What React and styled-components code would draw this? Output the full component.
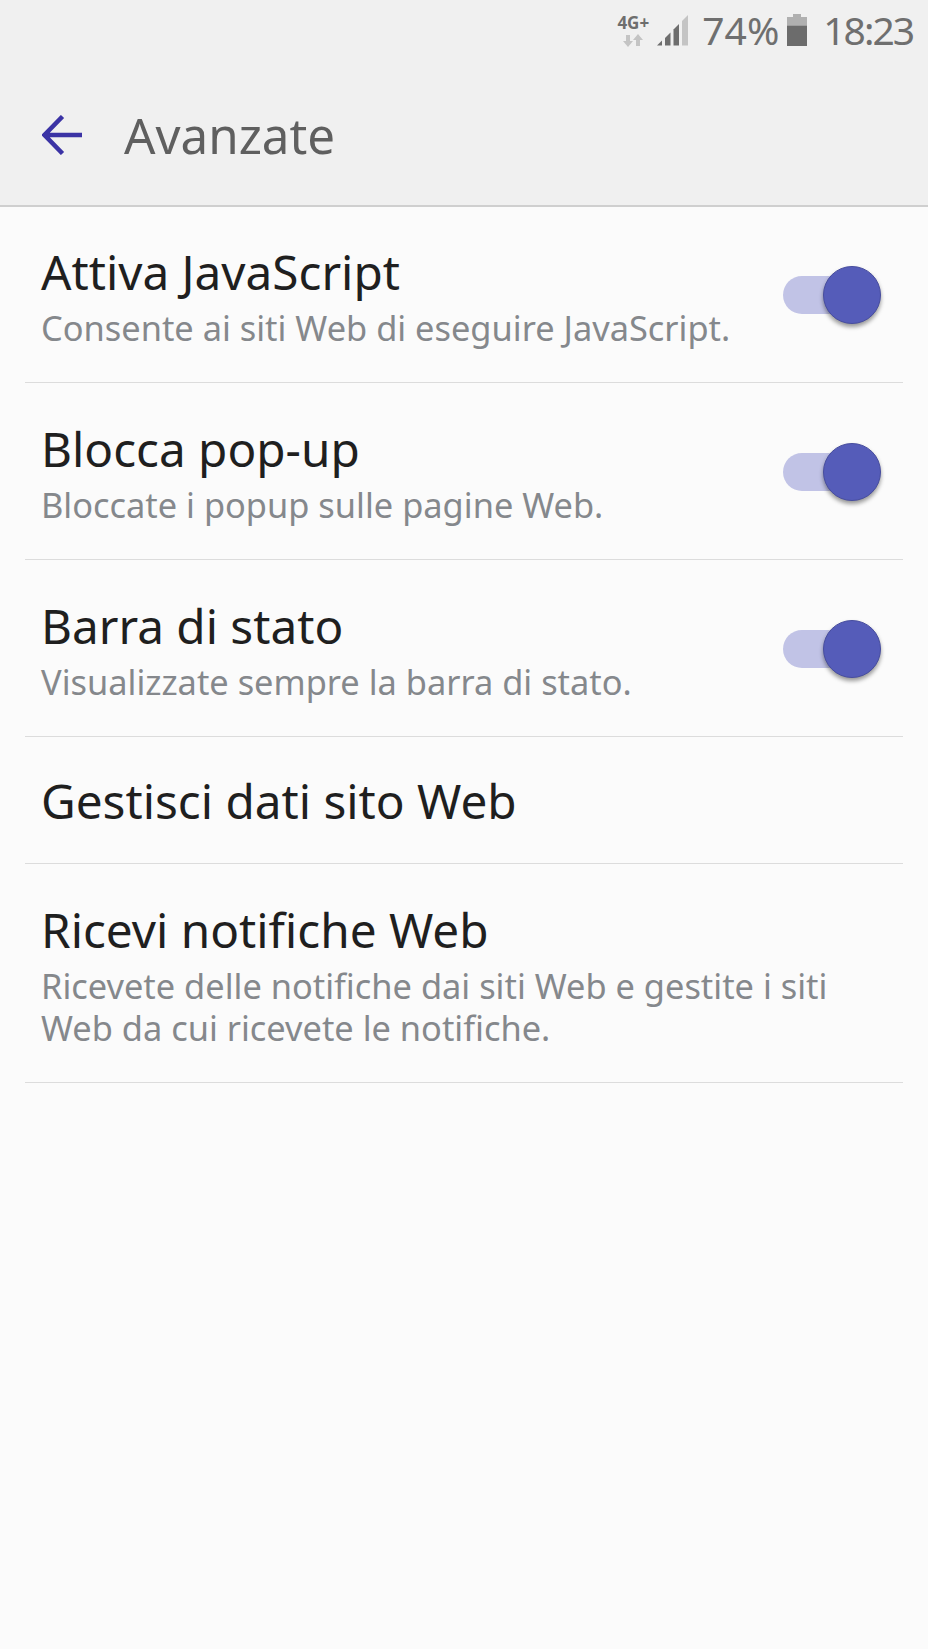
import React from "react";
import styled, { createGlobalStyle } from "styled-components";

const GlobalStyle = createGlobalStyle`
  html, body {
    margin: 0;
    padding: 0;
    background: #fbfbfb;
  }
  body {
    font-family: "Noto Sans", "Open Sans", sans-serif;
  }
`;

const settings = [
  { title: "Attiva JavaScript", text: "Consente ai siti Web di eseguire JavaScript.", toggle: true },
  { title: "Blocca pop-up", text: "Bloccate i popup sulle pagine Web.", toggle: true },
  { title: "Barra di stato", text: "Visualizzate sempre la barra di stato.", toggle: true },
  { title: "Gestisci dati sito Web" },
  {
    title: "Ricevi notifiche Web",
    text: "Ricevete delle notifiche dai siti Web e gestite i siti Web da cui ricevete le notifiche.",
  },
];

const App = () => (
  <Page>
    <GlobalStyle />
    <Header>
      <StatusBar>
        <Network>
          <NetworkLabel>4G+</NetworkLabel>
          <ArrowsIcon />
        </Network>
        <SignalIcon />
        <Percent>74%</Percent>
        <BatteryIcon />
        <Clock>18:23</Clock>
      </StatusBar>
      <AppBar>
        <BackIcon />
        <Title>Avanzate</Title>
      </AppBar>
    </Header>
    <List>
      {settings.map((item) => (
        <Row key={item.title} $single={!item.text}>
          <RowText>
            <RowTitle>{item.title}</RowTitle>
            {item.text && <RowDescription>{item.text}</RowDescription>}
          </RowText>
          {item.toggle && (
            <Switch>
              <Knob />
            </Switch>
          )}
        </Row>
      ))}
    </List>
  </Page>
);

const ArrowsIcon = () => (
  <Arrows viewBox="0 0 20 13" width="20" height="13">
    <path d="M3 1h4v6h3l-5 6-5-6h3z" fill="#c4c4c4" />
    <path d="M13 12h4V6h3l-5-6-5 6h3z" fill="#c4c4c4" />
  </Arrows>
);

const SignalIcon = () => (
  <Signal viewBox="0 0 31 31" width="31" height="31">
    <path d="M0 30.500l5-5v5z" fill="#6e6e6e" />
    <path d="M8 23l5.500-5.500v13H8z" fill="#6e6e6e" />
    <path d="M16.500 14.500L22 9v21.500h-5.500z" fill="#6e6e6e" />
    <path d="M25 6l6-6v30.500h-6z" fill="#c4c4c4" />
  </Signal>
);

const BatteryIcon = () => (
  <Battery viewBox="0 0 20 32" width="20" height="32">
    <path d="M6 0h8v3h6v8.500H0V3h6z" fill="#b0b0b0" />
    <path d="M0 11.500h20V32H0z" fill="#6c6c6c" />
  </Battery>
);

const BackIcon = () => (
  <Back viewBox="0 0 40 40" width="40" height="40">
    <path d="M40 20H4M20.500 1.500L2.500 20l18 18.500" fill="none" stroke="#3b33a5" strokeWidth="4.500" />
  </Back>
);

const Page = styled.div`
  width: 928px;
  min-height: 1649px;
  background: #fbfbfb;
`;

const Header = styled.header`
  height: 207px;
  background: #f0f0f0;
  border-bottom: 2px solid #cfcfcf;
  box-sizing: border-box;
`;

const StatusBar = styled.div`
  height: 60px;
  padding-right: 15px;
  display: flex;
  justify-content: flex-end;
  align-items: center;
  color: #6f6f6f;
`;

const Network = styled.div`
  display: flex;
  flex-direction: column;
  align-items: center;
  width: 32px;
  margin-right: 8px;
`;

const NetworkLabel = styled.span`
  font-size: 17px;
  line-height: 18px;
  font-weight: 700;
  color: #6e6e6e;
`;

const Arrows = styled.svg`
  margin-top: 2px;
`;

const Signal = styled.svg`
  margin-right: 14px;
`;

const Battery = styled.svg`
  margin: 0 16px 0 8px;
`;

const Percent = styled.span`
  font-size: 39px;
  line-height: 46px;
`;

const Clock = styled(Percent)`
  letter-spacing: -2px;
`;

const AppBar = styled.div`
  height: 145px;
  display: flex;
  align-items: center;
  padding: 4px 0 0 42px;
  box-sizing: border-box;
`;

const Back = styled.svg`
  flex: none;
`;

const Title = styled.h1`
  margin: -1px 0 0 42px;
  font-size: 49.3px;
  font-weight: 400;
  color: #5f5f5f;
`;

const List = styled.div`
  margin-top: -1px;
  padding: 0 25px;
`;

const Row = styled.div`
  box-sizing: border-box;
  border-bottom: 1px solid #dcdcdc;
  display: flex;
  align-items: center;
  justify-content: space-between;
  padding: ${(props) => (props.$single ? "34px 33px 32px 16px" : "36px 33px 33px 16px")};
`;

const RowText = styled.div`
  flex: 1;
  min-width: 0;
`;

const RowTitle = styled.div`
  font-size: 47.7px;
  line-height: 60px;
  color: #1f1f1f;
`;

const RowDescription = styled.div`
  margin-top: 5px;
  font-size: 34.4px;
  line-height: 42px;
  color: #85888c;
`;

const Switch = styled.div`
  position: relative;
  flex: none;
  width: 87px;
  height: 38px;
  border-radius: 19px;
  background: #c1c3e6;
  margin: -2px 0 0 20px;
`;

const Knob = styled.div`
  position: absolute;
  right: -11px;
  top: -10px;
  width: 58px;
  height: 58px;
  box-sizing: border-box;
  border-radius: 50%;
  background: #555cb9;
  border: 1px solid #474d9e;
  box-shadow: 0 3px 4px rgba(0, 0, 0, 0.4);
`;

export default App;
